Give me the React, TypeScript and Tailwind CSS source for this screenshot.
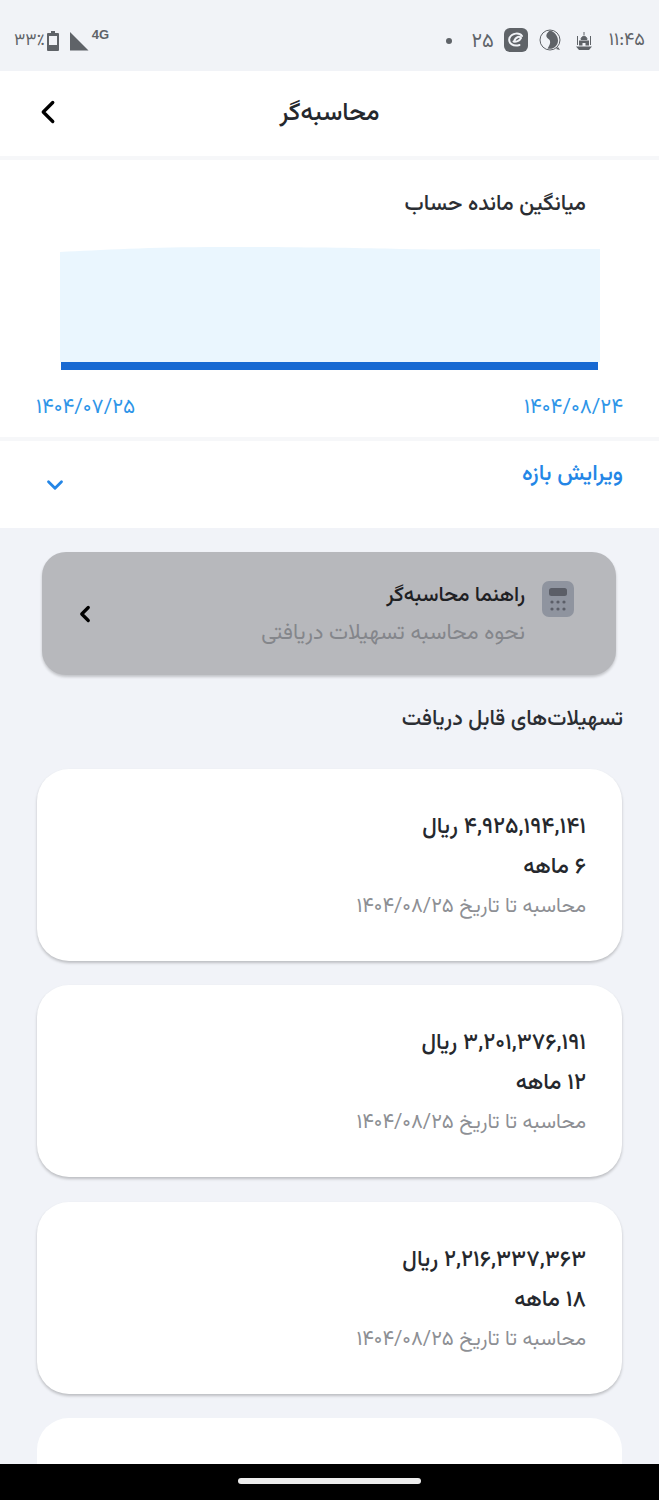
import { ChevronDown, ChevronLeft } from 'lucide-react';

const fa = "font-['Vazirmatn','DejaVu_Sans','Noto_Sans',sans-serif]";

const loans = [
  { amount: '۴,۹۲۵,۱۹۴,۱۴۱ ریال', term: '۶ ماهه' },
  { amount: '۳,۲۰۱,۳۷۶,۱۹۱ ریال', term: '۱۲ ماهه' },
  { amount: '۲,۲۱۶,۳۳۷,۳۶۳ ریال', term: '۱۸ ماهه' },
];

function StatusBar() {
  return (
    <div dir="ltr" className="flex h-[71px] items-center justify-between bg-[#f1f3f7] pl-[14px] pr-[14px] pt-[10px] text-[#5f6368]">
      <div className="flex items-center">
        <span className="mt-[1px] text-[17px] leading-none">۳۳٪</span>
        <svg width="12" height="20" viewBox="0 0 12 20" className="ml-[2px]">
          <path d="M4 0h4v2h3a1 1 0 0 1 1 1v16a1 1 0 0 1-1 1H1a1 1 0 0 1-1-1V3a1 1 0 0 1 1-1h3z M2 5v9h8V5z" fill="#5f6368" fillRule="evenodd" />
        </svg>
        <svg width="20" height="20" viewBox="0 0 20 20" className="ml-[10px]">
          <path d="M1 1 19.500 19.500H1z" fill="#5f6368" />
        </svg>
        <span className="mb-[13px] ml-[3px] font-['Liberation_Sans',sans-serif] text-[13px] font-bold leading-none">4G</span>
      </div>
      <div className="flex items-center">
        <span className="h-[6px] w-[6px] rounded-full bg-[#5f6368]" />
        <span className="ml-[20px] mt-[2px] text-[20px] leading-none">۲۵</span>
        <svg width="24" height="24" viewBox="0 0 24 24" className="ml-[10px] mb-[1px]">
          <rect width="24" height="24" rx="6" fill="#5f6368" />
          <path d="M18 8C15.500 4.500 8 4.500 5.500 10c-1.500 5 3.500 9 10 7M9.500 13.500c2.500.5 6-.5 7.500-3.500-1-2-5-2-7 3.500" fill="none" stroke="#f1f3f7" strokeWidth="2" strokeLinecap="round" />
        </svg>
        <svg width="23" height="23" viewBox="0 0 23 23" className="ml-[11px]">
          <circle cx="11" cy="11" r="10" fill="#f1f3f7" stroke="#5f6368" strokeWidth="1" />
          <path d="M11 1.500c-4 3-5 6-1.500 8.500 3 2 1.500 6-1 9.500 5 1.500 10.500-2 10.500-8 0-5-4-9-8-10z" fill="#5f6368" />
          <path d="M19 18l2 3-4-1z" fill="#5f6368" />
        </svg>
        <svg width="16" height="18" viewBox="0 0 16 18" className="ml-[14px]">
          <path d="M8 0v3M8 4c-2.500 1-3 2-3 3.500h6C11 6 10.500 5 8 4zM1.500 4v9M14.500 4v9" fill="#5f6368" stroke="#5f6368" strokeWidth="1" />
          <path d="M3 8.500h10v5H9.500v-2.500h-3v2.500H3zM0 14.500h16L13 18H3z" fill="#5f6368" />
        </svg>
        <span className="ml-[17px] text-[18px] leading-none">۱۱:۴۵</span>
      </div>
    </div>
  );
}

function Chart() {
  return (
    <div dir="ltr" className="mx-[60px] mt-[27px] flex flex-col">
      <svg width="540" height="115" viewBox="0 0 540 115" className="block">
        <path d="M0 5C40 3 90 0 160 0S300 1 340 2 480 2 540 2V115H0z" fill="#eaf6fe" />
      </svg>
      <div className="ml-[1px] h-[8px] w-[537px] bg-[#1769d2]" />
    </div>
  );
}

function LoanCard({ amount, term }: { amount: string; term: string }) {
  return (
    <div className="flex h-[192px] flex-col rounded-[32px] bg-white pr-[36px] pt-[44px] shadow-[0_2px_3px_rgba(0,0,0,0.22)]">
      <div className="text-[22.5px] font-medium leading-[30px] text-[#25282d]">{amount}</div>
      <div className="mt-[10px] text-[22.5px] font-medium leading-[30px] text-[#25282d]">{term}</div>
      <div className="mt-[9px] text-[20.3px] leading-[30px] text-[#8d8f94]">محاسبه تا تاریخ ۱۴۰۴/۰۸/۲۵</div>
    </div>
  );
}

export default function App() {
  return (
    <div dir="rtl" className={`relative h-[1500px] w-[659px] overflow-hidden bg-[#f1f3f8] ${fa}`}>
      <StatusBar />

      <div className="relative flex h-[85px] items-center justify-center bg-white">
        <h1 className="text-[25px] font-medium text-[#25282d]">محاسبه‌گر</h1>
        <ChevronLeft className="absolute left-[29px] top-[22px] h-[38px] w-[38px] text-black" strokeWidth={2.1} />
      </div>

      <section className="h-[281px] border-t-4 border-[#f6f7f9] bg-white pt-[30px]">
        <h2 className="pr-[73px] text-[21.6px] font-medium leading-[30px] text-[#2b2e33]">میانگین مانده حساب</h2>
        <Chart />
        <div className="mt-[25px] flex justify-between px-[36px] text-[20.7px] leading-[26px] text-[#2e95e8]">
          <span>۱۴۰۴/۰۸/۲۴</span>
          <span>۱۴۰۴/۰۷/۲۵</span>
        </div>
      </section>

      <section className="flex h-[91px] justify-between border-t-4 border-[#f6f7f9] bg-white pl-[42px] pr-[36px] pt-[19px]">
        <span className="text-[22.4px] font-medium leading-[30px] text-[#2486e6]">ویرایش بازه</span>
        <ChevronDown className="mt-[12px] h-[26px] w-[26px] text-[#2486e6]" strokeWidth={2.6} />
      </section>

      <div className="ml-[42px] mr-[43px] mt-[24px] flex h-[123px] items-center justify-between rounded-[24px] bg-[#b7b8bc] pl-[30px] pr-[42px] shadow-[0_2px_3px_rgba(0,0,0,0.2)]">
        <div className="flex items-start">
          <svg width="32" height="36" viewBox="0 0 32 36" className="mt-[2px]">
            <rect width="32" height="36" rx="7" fill="#8f949f" />
            <rect x="7" y="7" width="18" height="8" rx="2.500" fill="#5b5e67" />
            <g fill="#5b5e67">
              <circle cx="10" cy="21" r="1.600" /><circle cx="16" cy="21" r="1.600" /><circle cx="22" cy="21" r="1.600" />
              <circle cx="10" cy="28" r="1.600" /><circle cx="16" cy="28" r="1.600" /><circle cx="22" cy="28" r="1.600" />
            </g>
          </svg>
          <div className="mr-[17px] mt-[2px]">
            <div className="text-[20.8px] font-medium leading-[30px] text-[#1e2023]">راهنما محاسبه‌گر</div>
            <div className="mt-[8px] text-[21.7px] leading-[30px] text-[#84868b]">نحوه محاسبه تسهیلات دریافتی</div>
          </div>
        </div>
        <ChevronLeft className="h-[26px] w-[26px] text-black" strokeWidth={3} />
      </div>

      <h3 className="mt-[30px] pr-[36px] text-[21.6px] font-medium leading-[30px] text-[#2b2e33]">تسهیلات‌های قابل دریافت</h3>

      <div className="mx-[37px] mt-[34px] flex flex-col gap-[24.4px]">
        {loans.map((l) => (
          <LoanCard key={l.term} amount={l.amount} term={l.term} />
        ))}
        <div className="h-[192px] rounded-[32px] bg-white" />
      </div>

      {/* android nav bar */}
      <div className="absolute bottom-0 left-0 right-0 flex h-[36px] items-center justify-center bg-black pb-[2px]">
        <div className="h-[6px] w-[183px] rounded-full bg-[#ececec]" />
      </div>
    </div>
  );
}
